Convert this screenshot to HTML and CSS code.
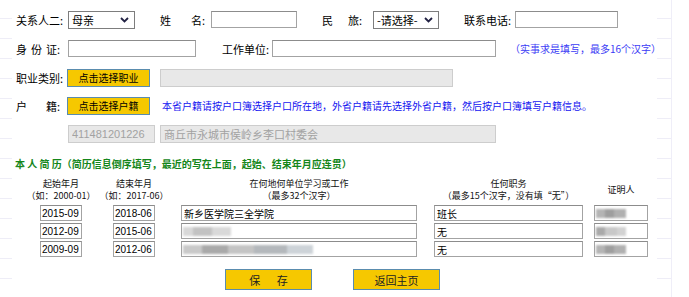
FILE: index.html
```html
<!DOCTYPE html>
<html lang="zh-CN">
<head>
    <meta charset="UTF-8">
    <title>个人信息填写</title>
    <link rel="stylesheet" href="styles.css">
</head>
<body>
    <div class="form">
        <div class="row row-wide">
            <span class="lbl lbl-rel">关系人二:</span>
            <select class="sel sel-rel"><option>母亲</option></select>
            <span class="lbl lbl-name"><span class="spread sp-name">姓名</span>:</span>
            <input type="text" class="txt in-name">
            <span class="lbl lbl-nation"><span class="spread sp-nation">民旅</span>:</span>
            <select class="sel sel-nation"><option>-请选择-</option></select>
            <span class="lbl lbl-phone">联系电话:</span>
            <input type="text" class="txt in-phone">
        </div>

        <div class="row row-wide">
            <span class="lbl lbl-id"><span class="spread sp-id">身份证</span>:</span>
            <input type="text" class="txt in-id">
            <span class="lbl lbl-unit">工作单位:</span>
            <input type="text" class="txt in-unit">
            <span class="note note-unit">（实事求是填写，最多16个汉字）</span>
        </div>

        <div class="row">
            <span class="lbl lbl-id">职业类别:</span>
            <button class="btn-pick">点击选择职业</button>
            <input type="text" class="txt txt-off in-job" disabled>
        </div>

        <div class="row">
            <span class="lbl lbl-id"><span class="spread sp-id">户籍</span>:</span>
            <button class="btn-pick">点击选择户籍</button>
            <span class="note note-hk">本省户籍请按户口簿选择户口所在地，外省户籍请先选择外省户籍，然后按户口簿填写户籍信息。</span>
        </div>

        <div class="row">
            <input type="text" class="txt txt-off in-code" value="411481201226" disabled>
            <input type="text" class="txt txt-off in-addr" value="商丘市永城市侯岭乡李口村委会" disabled>
        </div>

        <h3 class="resume-title">本 人 简 历（简历信息倒序填写，最近的写在上面，起始、结束年月应连贯）</h3>

        <div class="resume">
            <div class="hd">起始年月<br>（如：2000-01）</div>
            <div class="hd">结束年月<br>（如：2017-06）</div>
            <div class="hd">在何地何单位学习或工作<br>（最多32个汉字）</div>
            <div class="hd">任何职务<br>（最多15个汉字，没有填“无”）</div>
            <div class="hd">证明人</div>

            <input type="text" class="txt in-date" value="2015-09">
            <input type="text" class="txt in-date" value="2018-06">
            <input type="text" class="txt in-work" value="新乡医学院三全学院">
            <input type="text" class="txt in-post" value="班长">
            <div class="masked in-who"><span class="blur blur-who"></span></div>

            <input type="text" class="txt in-date" value="2012-09">
            <input type="text" class="txt in-date" value="2015-06">
            <div class="masked in-work"><span class="blur blur-short"></span></div>
            <input type="text" class="txt in-post" value="无">
            <div class="masked in-who"><span class="blur blur-who blur-alt"></span></div>

            <input type="text" class="txt in-date" value="2009-09">
            <input type="text" class="txt in-date" value="2012-06">
            <div class="masked in-work"><span class="blur blur-long"></span></div>
            <input type="text" class="txt in-post" value="无">
            <div class="masked in-who"><span class="blur blur-who"></span></div>
        </div>

        <div class="actions">
            <button class="btn-main">保&emsp;&ensp;存</button>
            <button class="btn-main">返回主页</button>
        </div>
    </div>
</body>
</html>
```

FILE: styles.css
```css
body {
    margin: 0;
    font-family: "Noto Sans CJK SC", sans-serif;
    font-size: 11px;
    color: #000;
    background:
        repeating-linear-gradient(to bottom, transparent 0 18px, #eeedf7 18px 19px, transparent 19px 20px) 0 0 / 12px 100% no-repeat,
        repeating-linear-gradient(to bottom, transparent 0 18px, #eeedf7 18px 19px, transparent 19px 20px) 657px 0 / 14px 100% no-repeat,
        linear-gradient(#efeef8, #efeef8) 671px 0 / 1px 100% no-repeat,
        #fff;
    height: 297px;
    overflow: hidden;
}
.form {
    padding: 10px 0 0 16px;
}
.row {
    display: flex;
    align-items: center;
    height: 19px;
    margin-bottom: 9px;
}
.row-wide {
    margin-bottom: 10px;
}
.lbl {
    display: inline-block;
    white-space: nowrap;
}
.spread {
    display: inline-block;
    text-align-last: justify;
}
.sp-name { width: 42px; }
.sp-nation { width: 37px; }
.sp-id { width: 41px; }

.lbl-rel { width: 50px; margin-right: 2px; }
.lbl-name { width: 47px; margin-left: 25px; margin-right: 4px; }
.lbl-nation { width: 44px; margin-left: 25px; margin-right: 7px; }
.lbl-phone { width: 46px; margin-left: 25px; margin-right: 5px; }
.lbl-id { width: 46px; margin-right: 6px; }
.lbl-unit { width: 48px; margin-left: 26px; margin-right: 2px; }

.txt {
    box-sizing: border-box;
    height: 17px;
    border: 1px solid #a3a3a3;
    border-top-color: #8c8c8c;
    padding: 0 3px;
    margin: 0;
    font-family: "Liberation Sans", "Noto Sans CJK SC", sans-serif;
    font-size: 11px;
    color: #000;
    background: #fff;
    outline: none;
}
.txt-off {
    background: #e8e8e8;
    border-color: #cdcdcd;
    color: #a2a2a2;
}
.sel {
    box-sizing: border-box;
    height: 18px;
    border: 1px solid #7d7d7d;
    padding: 0 0 0 3px;
    font-family: "Noto Sans CJK SC", sans-serif;
    font-size: 11px;
    color: #000;
    appearance: none;
    -webkit-appearance: none;
    background: #fff url("data:image/svg+xml,%3Csvg xmlns='http://www.w3.org/2000/svg' width='9' height='6'%3E%3Cpath d='M1 1l3.5 3.5L8 1' fill='none' stroke='%23222244' stroke-width='1.8'/%3E%3C/svg%3E") no-repeat right 5px center;
}
.sel-rel { width: 67px; }
.sel-nation { width: 66px; }

.in-name { width: 86px; }
.in-phone { width: 103px; }
.in-id { width: 128px; }
.in-unit { width: 224px; }
.in-job { width: 293px; margin-left: 10px; height: 18px; }
.in-code { width: 87px; margin-left: 52px; height: 18px; }
.in-addr { width: 336px; margin-left: 5px; height: 18px; }

.note {
    font-size: 10px;
    white-space: nowrap;
}
.note-unit {
    color: #3b3bf5;
    margin-left: 14px;
}
.note-hk {
    color: #1414f0;
    margin-left: 12px;
}

.btn-pick {
    box-sizing: border-box;
    width: 83px;
    height: 18px;
    margin: 0 0 0 -1px;
    padding: 0;
    border: 1px solid #5a8cae;
    background: #f6c800;
    font-family: "Noto Sans CJK SC", sans-serif;
    font-size: 10px;
    color: #000;
}

.resume-title {
    margin: 15px 0 8px -1px;
    font-size: 10px;
    font-weight: bold;
    color: #14861a;
    line-height: 12px;
    white-space: nowrap;
}

.resume {
    display: grid;
    grid-template-columns: 74px 72px 258px 161px 64px;
    justify-items: center;
    align-items: center;
    row-gap: 2px;
    margin-left: 8px;
}
.hd {
    font-size: 9px;
    line-height: 12px;
    text-align: center;
    white-space: nowrap;
    margin-bottom: 1px;
    color: #111;
}
.resume .txt {
    height: 16px;
    font-size: 10px;
    padding: 0 0 0 1px;
}
.in-date { width: 42px; }
.in-work { width: 236px; }
.in-post { width: 149px; }
.in-who { width: 54px; }
.resume .in-post,
.resume .in-work {
    font-family: "Noto Sans CJK SC", sans-serif;
    padding-left: 2px;
}
.masked {
    box-sizing: border-box;
    height: 16px;
    border: 1px solid #a3a3a3;
    border-top-color: #8c8c8c;
    background: #fff;
    position: relative;
    overflow: hidden;
}
.blur {
    position: absolute;
    top: 3px;
    left: 1px;
    height: 9px;
    filter: blur(1.2px);
}
.blur-who {
    width: 30px;
    background: linear-gradient(to right, #b4b4b4 0 30%, #9e9e9e 30% 60%, #b0b0b0 60%);
}
.blur-alt {
    background: linear-gradient(to right, #a9a9a9 0 30%, #c8c8c8 30% 70%, #d2d2d2 70%);
}
.blur-short {
    width: 48px;
    background: linear-gradient(to right, #d8d8d8 0 20%, #c2c2c2 20% 60%, #d9d9d9 60%);
}
.blur-long {
    width: 130px;
    background: linear-gradient(to right, #c9c9c9 0 15%, #a9a9a9 15% 35%, #c4c4c4 35% 55%, #b4b8bc 55% 80%, #cdd3d8 80%);
}

.actions {
    display: flex;
    gap: 41px;
    margin: 12px 0 0 209px;
}
.btn-main {
    box-sizing: border-box;
    width: 87px;
    height: 21px;
    padding: 0;
    border: 1px solid #5a8cae;
    background: #f6c800;
    font-family: "Noto Sans CJK SC", sans-serif;
    font-size: 11px;
    color: #222;
}
```
